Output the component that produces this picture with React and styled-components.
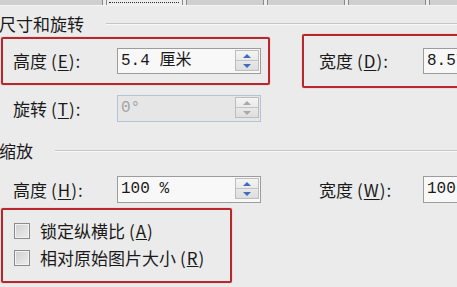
import React from 'react';
import styled, { createGlobalStyle } from 'styled-components';

const Global = createGlobalStyle`
  html, body {
    margin: 0;
    padding: 0;
    background: #ebebeb;
    overflow: hidden;
  }
`;

const Page = styled.div`
  width: 457px;
  height: 287px;
  overflow: hidden;
  background: #ebebeb;
  color: #1a1a1a;
  font-family: "Noto Sans CJK SC", "Liberation Sans", sans-serif;
  font-size: 17px;
`;

const TabStrip = styled.div`
  display: flex;
  align-items: flex-end;
  gap: 3px;
  height: 5px;
  margin-left: -20px;
  overflow: hidden;
  border-bottom: 1px solid #f4f4f4;
`;

const Tab = styled.div`
  position: relative;
  flex: none;
  width: ${(p) => p.$w}px;
  height: 22px;
  box-sizing: border-box;
  border: 1px solid #8a8a8a;
  border-bottom: none;
  background: ${(p) => (p.$active ? '#ededed' : '#cfcfcf')};

  &::after {
    content: '';
    display: ${(p) => (p.$active ? 'block' : 'none')};
    position: absolute;
    left: 2px;
    right: 3px;
    bottom: 2px;
    border-top: 1px dotted #2a2a2a;
  }
`;

const Section = styled.div`
  display: flex;
  align-items: center;
  height: 20px;
  margin-top: ${(p) => p.$top}px;
`;

const SectionTitle = styled.span`
  margin-left: -1px;
  line-height: 20px;
  white-space: nowrap;
`;

const Rule = styled.div`
  flex: 1;
  margin-left: 22px;
  border-top: 1px solid #c6c6c6;
  border-bottom: 1px solid #f8f8f8;
`;

const Row = styled.div`
  display: flex;
  align-items: center;
  margin-top: ${(p) => p.$top || 0}px;
  padding-left: ${(p) => p.$pad || 0}px;
`;

const Highlight = styled.div`
  flex: none;
  display: flex;
  align-items: center;
  box-sizing: border-box;
  width: ${(p) => p.$w}px;
  height: ${(p) => p.$h}px;
  margin-left: ${(p) => p.$left}px;
  padding-left: ${(p) => p.$pad}px;
  border: 2px solid #b8272c;
  border-radius: 2px;
  box-shadow: 0 0 1px rgba(190, 40, 45, 0.7);
`;

const Label = styled.span`
  flex: none;
  width: ${(p) => p.$w || 104}px;
  margin-left: ${(p) => p.$left || 0}px;
  line-height: 20px;
  white-space: nowrap;

  u {
    text-decoration: underline;
    text-underline-offset: 2px;
  }
`;

const Paren = styled.span`
  margin-left: 4px;
  letter-spacing: 1px;
`;

const Input = styled.div`
  flex: none;
  display: flex;
  align-items: flex-start;
  box-sizing: border-box;
  width: 144px;
  height: ${(p) => p.$h || 26}px;
  border: 1px solid ${(p) => (p.$disabled ? '#b3c3d8' : '#9c9c9c')};
  background: ${(p) => (p.$disabled ? '#e6e6e6' : '#f8f8f8')};
`;

const Value = styled.span`
  flex: 1;
  padding-left: 3px;
  line-height: 24px;
  font-family: "Liberation Mono", "Noto Sans CJK SC", monospace;
  font-size: 16px;
  color: ${(p) => (p.$disabled ? '#a4a4a4' : '#1a1a1a')};
  white-space: nowrap;
`;

const Spinner = styled.div`
  flex: none;
  display: flex;
  flex-direction: column;
  width: 24px;
  height: 21px;
  margin: 1px 1px 0 0;
  box-sizing: border-box;
  border: 1px solid #bdbdbd;
  background: linear-gradient(#f4f4f4, #dedede);
`;

const SpinHalf = styled.div`
  flex: 1;
  display: flex;
  align-items: center;
  justify-content: center;
  border-top: ${(p) => (p.$down ? '1px solid #c4c4c4' : 'none')};

  &::before {
    content: '';
    width: 0;
    height: 0;
    border-left: 4px solid transparent;
    border-right: 4px solid transparent;
    ${(p) => (p.$down ? 'border-top' : 'border-bottom')}: 4px solid
      ${(p) => (p.$disabled ? '#a9a9a9' : '#3c6fc2')};
  }
`;

const Checks = styled.div`
  display: flex;
  flex-direction: column;
  box-sizing: border-box;
  width: 231px;
  height: 75px;
  margin: 5px 0 0 1px;
  padding: 7px 0 0 11px;
  border: 2px solid #b8272c;
  border-radius: 2px;
  box-shadow: 0 0 1px rgba(190, 40, 45, 0.7);
`;

const CheckRow = styled.label`
  display: flex;
  align-items: center;
  height: 27px;
  white-space: nowrap;
`;

const Box = styled.span`
  flex: none;
  width: 16px;
  height: 16px;
  box-sizing: border-box;
  margin-right: 10px;
  border: 1px solid #8c8c8c;
  background: linear-gradient(135deg, #cfcfcf, #eeeeee);
  box-shadow: inset 0 0 0 1px #f2f2f2;
`;

const tabs = [123, 77, 78, 78, 78, 78];

function Spin({ disabled }) {
  return (
    <Spinner>
      <SpinHalf $disabled={disabled} />
      <SpinHalf $down $disabled={disabled} />
    </Spinner>
  );
}

function Field({ value, disabled, h, spin = true }) {
  return (
    <Input $disabled={disabled} $h={h}>
      <Value $disabled={disabled}>{value}</Value>
      {spin && <Spin disabled={disabled} />}
    </Input>
  );
}

function Key({ name, k, ...rest }) {
  return (
    <Label {...rest}>
      {name}
      <Paren>
        (<u>{k}</u>):
      </Paren>
    </Label>
  );
}

export default function App() {
  return (
    <Page>
      <Global />
      <TabStrip>
        {tabs.map((w, i) => (
          <Tab key={i} $w={w} $active={i === 1} />
        ))}
      </TabStrip>

      <Section $top={8}>
        <SectionTitle>尺寸和旋转</SectionTitle>
        <Rule />
      </Section>

      <Row>
        <Highlight $w={269} $h={48} $left={1} $pad={10}>
          <Key name="高度" k="E" />
          <Field value="5.4 厘米" />
        </Highlight>
        <Highlight $w={220} $h={54} $left={32} $pad={15}>
          <Key name="宽度" k="D" />
          <Field value="8.57" spin={false} />
        </Highlight>
      </Row>

      <Row $top={7} $pad={13}>
        <Key name="旋转" k="T" />
        <Field value="0°" disabled h={27} />
      </Row>

      <Section $top={19}>
        <SectionTitle>缩放</SectionTitle>
        <Rule />
      </Section>

      <Row $top={15} $pad={13}>
        <Key name="高度" k="H" />
        <Field value="100 %" h={27} />
        <Key name="宽度" k="W" $left={58} />
        <Field value="100" h={27} spin={false} />
      </Row>

      <Checks>
        <CheckRow>
          <Box />
          锁定纵横比<Paren>(<u>A</u>)</Paren>
        </CheckRow>
        <CheckRow>
          <Box />
          相对原始图片大小<Paren>(<u>R</u>)</Paren>
        </CheckRow>
      </Checks>
    </Page>
  );
}
